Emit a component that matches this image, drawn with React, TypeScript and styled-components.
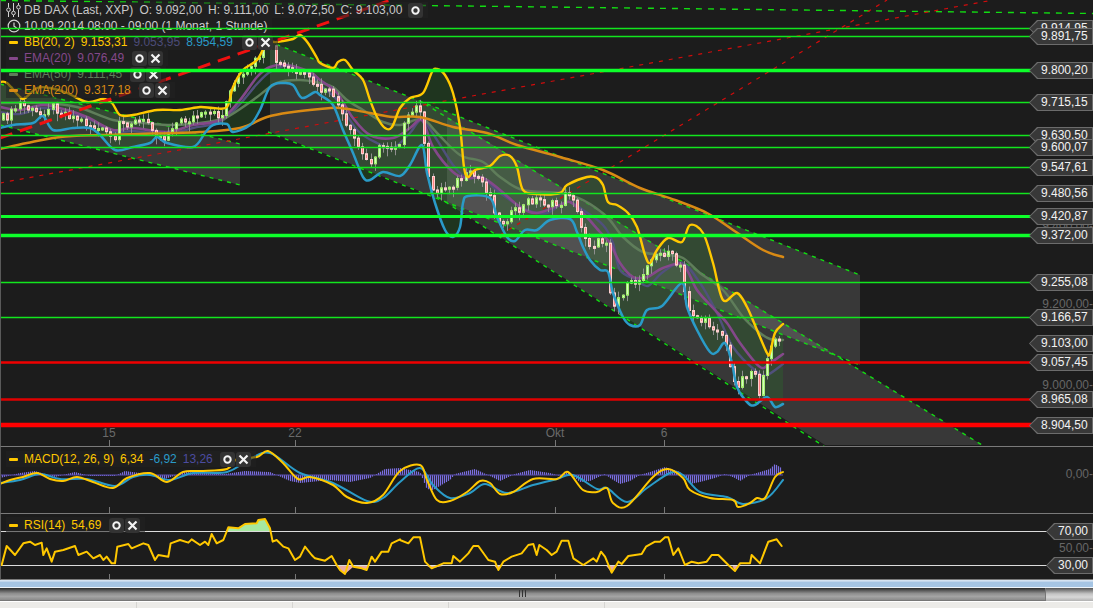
import React from "react";
import styled, { createGlobalStyle } from "styled-components";

type P = [number, number];

const GlobalStyle = createGlobalStyle`
  html, body { margin: 0; padding: 0; background: #1c1c1c; overflow: hidden; }
  body { font-family: "Liberation Sans", Arial, sans-serif; }
`;

/* ---------- data, page coordinates ---------- */
const upper: P[] = [[0,82],[7,83],[20,97],[25,98],[37,88],[50,88],[67,93],[87,102],[103,99],[112,103],[120,115],[133,115],[157,110],[180,110],[200,107],[213,108],[227,107],[233,87],[243,70],[257,60],[267,43],[277,42],[293,39],[300,35],[308,43],[317,58],[320,63],[333,68],[338,62],[345,60],[353,70],[363,80],[370,100],[377,117],[385,128],[392,127],[400,108],[410,98],[423,93],[432,72],[437,69],[445,75],[453,93],[460,127],[464,167],[468,177],[475,170],[490,166],[500,156],[510,156],[517,167],[523,190],[537,194],[560,193],[567,185],[587,177],[597,178],[603,185],[608,202],[617,205],[628,213],[637,227],[645,255],[650,263],[657,250],[668,238],[682,242],[690,225],[703,233],[713,263],[723,300],[737,293],[747,307],[757,330],[767,353],[770,353],[775,333],[783,324]];
const lower: P[] = [[0,128],[13,125],[33,123],[43,116],[53,130],[73,128],[90,128],[100,135],[115,150],[133,147],[150,143],[157,137],[167,143],[193,147],[205,133],[213,125],[227,124],[233,132],[250,125],[260,110],[270,87],[283,83],[293,85],[302,98],[315,92],[320,95],[333,105],[343,130],[353,153],[363,177],[370,180],[383,172],[400,176],[410,165],[422,145],[427,173],[435,203],[445,230],[453,237],[460,227],[463,203],[468,196],[490,198],[497,217],[507,237],[515,241],[525,230],[537,230],[550,220],[570,219],[577,232],[583,247],[590,260],[600,270],[608,272],[613,293],[623,317],[630,325],[640,325],[647,310],[662,306],[682,283],[687,307],[697,330],[710,352],[717,352],[725,343],[732,363],[737,387],[748,403],[755,405],[767,397],[775,407],[783,404]];
const ema20: P[] = [[0,107],[20,110],[43,105],[67,110],[87,117],[113,130],[133,128],[167,132],[193,125],[220,120],[240,100],[257,77],[270,67],[287,65],[310,72],[320,80],[337,93],[353,118],[370,135],[393,138],[410,128],[422,120],[433,147],[453,172],[467,178],[483,178],[500,190],[520,207],[537,213],[560,205],[570,202],[583,213],[600,232],[610,243],[620,263],[633,277],[647,277],[663,268],[683,265],[697,290],[713,308],[727,323],[740,343],[760,367],[770,363],[783,354]];
const bbMid: P[] = [[0,112],[20,114],[43,108],[67,113],[87,118],[113,132],[133,131],[167,134],[193,128],[220,122],[240,104],[257,84],[270,72],[287,66],[310,74],[320,85],[337,100],[357,130],[377,143],[393,148],[410,133],[422,120],[437,140],[453,165],[467,178],[483,178],[500,193],[527,210],[547,213],[560,205],[570,202],[583,210],[603,225],[613,243],[620,270],[637,280],[648,286],[663,272],[682,263],[700,283],[717,313],[733,347],[757,372],[767,375],[783,364]];
const ema50: P[] = [[0,103],[43,103],[77,107],[113,120],[143,123],[173,125],[207,122],[227,117],[253,100],[277,83],[300,80],[320,83],[333,87],[347,100],[363,110],[383,122],[400,125],[422,119],[437,133],[460,155],[483,162],[500,177],[523,190],[560,193],[583,200],[607,217],[623,237],[643,252],[667,255],[683,258],[700,273],[723,290],[743,317],[760,333],[770,339],[783,340]];
const ema200: P[] = [[0,149],[27,143],[60,137],[100,135],[140,134],[200,132],[240,128],[267,117],[293,112],[320,109],[340,108],[370,113],[393,117],[420,117],[453,127],[487,133],[517,145],[560,157],[603,170],[640,188],[675,200],[707,213],[733,230],[763,250],[783,257]];
const closes: P[] = [[0,120],[10,115],[20,103],[30,110],[40,115],[50,105],[60,110],[70,115],[80,120],[90,125],[100,130],[110,135],[115,148],[118,125],[130,122],[150,122],[158,135],[165,138],[172,125],[180,122],[200,116],[213,115],[225,115],[228,90],[240,78],[250,72],[262,50],[270,45],[275,60],[280,65],[290,70],[300,75],[310,80],[320,90],[335,95],[345,125],[355,140],[365,160],[372,160],[378,150],[385,145],[398,145],[405,125],[415,108],[422,108],[425,155],[430,190],[440,190],[450,185],[460,180],[470,175],[480,178],[490,195],[500,225],[510,215],[520,210],[530,200],[540,200],[550,205],[560,205],[568,192],[573,195],[580,225],[590,245],[607,240],[612,310],[620,295],[630,285],[640,280],[647,262],[660,255],[670,250],[675,265],[680,265],[685,295],[690,310],[700,320],[710,325],[720,330],[727,345],[732,380],[737,385],[745,375],[755,370],[760,395],[767,365],[772,340],[778,335],[781,345]];

const macdY: P[] = [[0,484],[10,480],[23,477],[37,473],[50,479],[63,481],[77,477],[93,482],[113,488],[127,478],[150,473],[167,482],[183,472],[200,471],[227,469],[237,459],[257,457],[268,451],[283,463],[298,479],[310,477],[333,485],[347,497],[367,503],[383,495],[400,471],[420,465],[427,480],[437,500],[450,501],[467,492],[480,481],[490,483],[500,494],[513,492],[533,479],[557,479],[568,472],[583,490],[597,492],[607,488],[613,503],[627,506],[653,477],[668,469],[683,478],[690,490],[710,498],[733,500],[738,507],[750,503],[757,498],[765,498],[775,477],[783,472]];
const macdB: P[] = [[0,483],[20,480],[40,474],[60,479],[87,479],[115,486],[133,477],[150,475],[170,480],[193,473],[227,472],[250,459],[270,453],[300,473],[333,483],[367,501],[383,498],[400,482],[420,468],[433,485],[450,498],[470,493],[485,484],[507,493],[533,485],[557,479],[573,475],[597,489],[607,488],[627,502],[647,488],[670,473],[683,475],[700,492],[727,497],[743,504],[767,498],[783,480]];
const macdH: P[] = [[0,-3],[20,2],[35,4],[55,-2],[75,3],[90,-1],[115,-1],[125,4],[140,2],[165,-4],[185,3],[225,1],[245,4],[270,3],[290,-6],[300,-8],[330,-5],[350,-7],[370,-3],[385,6],[400,7],[420,3],[427,-14],[433,-15],[450,-5],[455,1],[475,6],[490,-1],[500,-6],[515,1],[530,5],[550,2],[560,-1],[568,3],[580,-7],[590,-6],[605,1],[610,-3],[620,-9],[630,-6],[640,0],[650,3],[665,8],[680,3],[690,-9],[700,-7],[715,-3],[725,1],[735,-3],[740,-6],[750,0],[760,3],[770,6],[775,11],[783,6]];

const rsiA: P[] = [[0,430],[5,435],[20,378],[45,405],[70,370],[90,365],[105,375],[125,368],[130,405],[140,385],[155,425],[165,395],[190,390],[225,378],[235,405],[260,395],[280,415],[300,405],[310,420],[320,410],[335,430],[345,430],[352,380],[385,372],[395,385],[430,370],[445,375],[465,420],[475,405],[505,410],[512,370],[540,360],[565,368],[575,358],[600,375],[615,365],[625,375],[635,342],[650,370],[670,360],[685,322],[715,325],[735,312],[770,310],[775,300],[795,297],[810,325],[818,365],[830,360],[850,380],[865,385],[885,420],[900,410],[915,380],[935,405],[945,415],[975,422],[995,408],[1010,435],[1020,450],[1035,462],[1048,420],[1060,440],[1085,445],[1100,450],[1115,410],[1125,425],[1145,395],[1165,395],[1175,370],[1200,358]];
const rsiB: P[] = [[0,360],[25,370],[40,352],[60,352],[75,425],[95,445],[130,430],[155,430],[160,408],[180,425],[205,400],[220,378],[235,378],[265,420],[285,425],[295,450],[310,425],[335,410],[365,400],[385,375],[400,372],[410,405],[418,375],[440,390],[455,405],[470,395],[485,362],[505,362],[520,415],[550,435],[580,415],[590,425],[603,395],[615,410],[635,458],[655,425],[665,432],[685,408],[725,402],[738,380],[765,365],[780,365],[795,352],[805,352],[820,405],[835,385],[855,435],[875,425],[895,430],[920,425],[935,405],[955,405],[985,435],[1005,453],[1020,430],[1050,430],[1055,405],[1080,430],[1105,365],[1130,358],[1145,378]];
const rsi: P[] = [
  ...rsiA.map(([x, y]): P => [x / 3, 420 + y / 3]),
  ...rsiB.map(([x, y]): P => [400 + x / 3, 420 + y / 3]),
];

const pts = (a: P[]) => a.map(([x, y]) => `${x},${y}`).join(" ");
const curve = (a: P[]) => {
  let d = `M${a[0][0]} ${a[0][1]}`;
  for (let i = 0; i < a.length - 1; i++) {
    const p0 = a[Math.max(0, i - 1)];
    const p1 = a[i];
    const p2 = a[i + 1];
    const p3 = a[Math.min(a.length - 1, i + 2)];
    d += `C${p1[0] + (p2[0] - p0[0]) / 6} ${p1[1] + (p2[1] - p0[1]) / 6} ${p2[0] - (p3[0] - p1[0]) / 6} ${p2[1] - (p3[1] - p1[1]) / 6} ${p2[0]} ${p2[1]}`;
  }
  return d;
};
const interp = (a: P[], x: number) => {
  for (let i = 1; i < a.length; i++) {
    if (x <= a[i][0]) {
      const [x0, y0] = a[i - 1];
      const [x1, y1] = a[i];
      return y0 + ((y1 - y0) * (x - x0)) / (x1 - x0 || 1);
    }
  }
  return a[a.length - 1][1];
};

type Candle = { x: number; top: number; h: number; wickT: number; wickB: number; up: boolean };
const candles: Candle[] = (() => {
  const out: Candle[] = [];
  let prev = interp(closes, 0);
  for (let i = 0; 3 + i * 4.13 < 783; i++) {
    const x = Math.round(3 + i * 4.13) + 0.5;
    const n = Math.sin(i * 12.9898) * 43758.5453;
    const f = n - Math.floor(n);
    const close = interp(closes, x) + (f - 0.5) * 9;
    const top = Math.min(prev, close);
    const h = Math.max(2, Math.abs(close - prev));
    out.push({
      x,
      top,
      h,
      wickT: top - 1 - ((i * 7) % 6),
      wickB: top + h + 1 + ((i * 11) % 8),
      up: close < prev,
    });
    prev = close;
  }
  return out;
})();

const histogram = Array.from({ length: 391 }, (_, i) => {
  const x = i * 2 + 0.5;
  return { x, v: interp(macdH, x) };
});

const levels = [
  { y: 28.5, w: 1.4, c: "#12e61e" },
  { y: 36.5, w: 1.4, c: "#12e61e" },
  { y: 70.5, w: 3.4, c: "#0dff2a" },
  { y: 102.5, w: 1.4, c: "#12e61e" },
  { y: 135.5, w: 1.4, c: "#12e61e" },
  { y: 147.5, w: 1.4, c: "#12e61e" },
  { y: 167.5, w: 1.4, c: "#12e61e" },
  { y: 193.5, w: 1.4, c: "#12e61e" },
  { y: 216.5, w: 3, c: "#0dff2a" },
  { y: 235.5, w: 3.6, c: "#0dff2a" },
  { y: 282.5, w: 1.4, c: "#12e61e" },
  { y: 317.5, w: 1.4, c: "#12e61e" },
  { y: 362.5, w: 2.6, c: "#f00000" },
  { y: 399.5, w: 2.6, c: "#e00000" },
  { y: 425, w: 4.4, c: "#ff0000" },
];

const tags: [string, number][] = [
  ["9.914,95", 28.5], ["9.891,75", 36.5], ["9.800,20", 70.5], ["9.715,15", 102.5],
  ["9.630,50", 135.5], ["9.600,07", 147.5], ["9.547,61", 167.5], ["9.480,56", 193.5],
  ["9.420,87", 216.5], ["9.372,00", 235.5], ["9.255,08", 282.5], ["9.166,57", 317.5],
  ["9.103,00", 343.5], ["9.057,45", 362.5], ["8.965,08", 399.5], ["8.904,50", 425.5],
];

const dates: [string, number][] = [["15", 109], ["22", 295], ["Okt", 555], ["6", 664]];

/* ---------- styled parts ---------- */
const Page = styled.div`
  width: 1093px;
  height: 608px;
  display: flex;
  flex-direction: column;
  background: #1c1c1c;
  overflow: hidden;
`;
const Pane = styled.section<{ $h: number }>`
  position: relative;
  flex: none;
  height: ${(p) => p.$h}px;
  border-left: 1px solid #5a5a5a;
  box-sizing: border-box;
  border-bottom: 1px solid #7a7a7a;
  overflow: hidden;
`;
const Drawing = styled.svg<{ $z: number }>`
  position: absolute;
  left: -1px;
  top: 0;
  z-index: ${(p) => p.$z};
`;
const Legend = styled.div<{ $top: number }>`
  position: absolute;
  left: 5px;
  top: ${(p) => p.$top}px;
  z-index: 1;
  display: flex;
  flex-direction: column;
  align-items: flex-start;
`;
const LegendRow = styled.div<{ $h: number }>`
  display: flex;
  align-items: center;
  height: ${(p) => p.$h}px;
  padding-right: 4px;
  background: rgba(34, 34, 34, 0.55);
  font-size: 12px;
  white-space: pre;
  color: #c8c8c8;
`;
const Swatch = styled.i<{ $c: string }>`
  width: 9px;
  height: 3px;
  margin: 0 6px 0 3px;
  border-radius: 1px;
  background: ${(p) => p.$c};
`;
const Ink = styled.span<{ $c: string; $gap?: number }>`
  color: ${(p) => p.$c};
  margin-right: ${(p) => p.$gap ?? 6}px;
`;
const IconSlot = styled.span`
  display: inline-flex;
  width: 15px;
  margin: 0 3px 0 0;
  justify-content: center;
`;
const CtlButton = styled.button`
  width: 15px;
  height: 15px;
  padding: 0;
  margin-right: 1px;
  border: 0;
  border-radius: 3px;
  background: #333;
  display: inline-flex;
  align-items: center;
  justify-content: center;
`;
const Tag = styled.div<{ $y: number; $small?: boolean }>`
  position: absolute;
  z-index: 3;
  right: 0;
  top: ${(p) => p.$y - 8.5}px;
  width: ${(p) => (p.$small ? 47 : 64)}px;
  height: 17px;
  padding-left: 12px;
  box-sizing: border-box;
  background: #6c6c6c;
  clip-path: polygon(0 50%, 8px 0, 100% 0, 100% 100%, 8px 100%);
  color: #f2f2f2;
  font-size: 12px;
  line-height: 17px;
  isolation: isolate;
  &::before {
    content: "";
    position: absolute;
    inset: 1px;
    background: #383838;
    clip-path: polygon(0 50%, 8px 0, 100% 0, 100% 100%, 8px 100%);
    z-index: -1;
  }
`;
const AxisLabel = styled.div<{ $y: number }>`
  position: absolute;
  z-index: 2;
  right: 0;
  top: ${(p) => p.$y - 7}px;
  height: 14px;
  line-height: 14px;
  font-size: 12px;
  color: #666;
`;
const DateLabel = styled.div<{ $x: number }>`
  position: absolute;
  z-index: 2;
  left: ${(p) => p.$x - 21}px;
  top: 426px;
  width: 40px;
  text-align: center;
  font-size: 12px;
  line-height: 14px;
  color: #6a6a6a;
`;
const BlueBar = styled.div`
  flex: none;
  height: 8px;
  box-sizing: border-box;
  background: #a6c5e4;
  border-top: 1px solid #d5e3f2;
  border-bottom: 1px solid #eef4fa;
  box-shadow: inset 0 1px 0 #c2d6ec;
`;
const ScrollTrack = styled.div`
  flex: none;
  display: flex;
  height: 13px;
  background: linear-gradient(#555, #c4c4c4 45%, #d8d8d8 70%, #b0b0b0);
`;
const ScrollThumb = styled.div`
  width: 1046px;
  box-sizing: border-box;
  display: flex;
  align-items: flex-start;
  justify-content: center;
  padding-top: 2px;
  border-right: 1px solid #777;
  border-bottom: 1px solid #777;
  background: linear-gradient(#2c2c2c, #8d8d8d 45%, #a4a4a4 70%, #8a8a8a);
`;
const Grip = styled.div`
  width: 7px;
  height: 7px;
  background: repeating-linear-gradient(90deg, #333 0 1px, transparent 1px 3px);
`;
const Footer = styled.div`
  flex: 1;
  display: flex;
  border-top: 1px solid #fff;
  background: #ecebe8;
`;
const FooterCell = styled.div<{ $w: number }>`
  width: ${(p) => p.$w}px;
  box-sizing: border-box;
  border-right: 1px solid #d6d5d2;
`;

/* ---------- small drawings ---------- */
const Ring = () => (
  <svg width="11" height="11" viewBox="0 0 11 11">
    <circle cx="5.5" cy="5.5" r="3.2" fill="none" stroke="#f4f4f4" strokeWidth="2" />
  </svg>
);
const Cross = () => (
  <svg width="11" height="11" viewBox="0 0 11 11">
    <path d="M1.5 1.5 9.5 9.5M9.5 1.5 1.5 9.5" stroke="#f4f4f4" strokeWidth="2.2" />
  </svg>
);
const Controls = () => (
  <>
    <CtlButton aria-label="Anzeigen"><Ring /></CtlButton>
    <CtlButton aria-label="Entfernen"><Cross /></CtlButton>
  </>
);
const Sliders = () => (
  <svg width="15" height="14" viewBox="0 0 15 14" fill="none" stroke="#d4d4d4">
    <path d="M2.5 0v4.5M2.5 9v5M7.5 0v8M7.5 12v2M12.5 0v2M12.5 6.5v7.5" />
    <circle cx="2.5" cy="6.8" r="1.8" />
    <circle cx="7.5" cy="10" r="1.8" />
    <circle cx="12.5" cy="4.2" r="1.8" />
  </svg>
);
const Clock = () => (
  <svg width="14" height="14" viewBox="0 0 14 14" fill="none" stroke="#d4d4d4" strokeWidth="1.2">
    <circle cx="7" cy="7" r="5.8" />
    <path d="M7 3.5V7.3L9.6 9" />
  </svg>
);

const Smooth = ({ d, c, w = 2.2 }: { d: P[]; c: string; w?: number }) => (
  <path d={curve(d)} fill="none" stroke={c} strokeWidth={w} strokeLinejoin="round" strokeLinecap="round" />
);
const Line = ({ d, c, w = 2.2 }: { d: P[]; c: string; w?: number }) => (
  <polyline points={pts(d)} fill="none" stroke={c} strokeWidth={w} strokeLinejoin="round" strokeLinecap="round" />
);
const Dashed = ({ a, b, c = "#12dc12", w = 1.4, dash = "4 5" }: { a: P; b: P; c?: string; w?: number; dash?: string }) => (
  <line x1={a[0]} y1={a[1]} x2={b[0]} y2={b[1]} stroke={c} strokeWidth={w} strokeDasharray={dash} />
);
const Ticks = ({ y }: { y: number }) => (
  <>
    {dates.map(([, x]) => (
      <line key={x} x1={x + 0.5} x2={x + 0.5} y1={y} y2={y + 6} stroke="#777" />
    ))}
  </>
);

const channelFill = "rgba(255,255,255,0.125)";

const MainChart = () => (
  <Drawing $z={0} width="1093" height="446" viewBox="0 0 1093 446">
    <polygon points="0,84 240,144 240,185 0,125" fill={channelFill} />
    <polygon points="270,42 860,275 860,365 270,132" fill={channelFill} />
    <polygon points="447,117 982,445 825,445 447,203" fill={channelFill} />
    <path
      d={`${curve(upper)}L${curve([...lower].reverse()).slice(1)}Z`}
      fill="rgba(38,120,38,0.28)"
    />

    <Dashed a={[0, 84]} b={[240, 144]} />
    <Dashed a={[0, 125]} b={[240, 185]} />
    <Dashed a={[268, 41]} b={[860, 275]} />
    <Dashed a={[268, 132]} b={[860, 365]} />
    <Dashed a={[425, 104]} b={[982, 445]} />
    <Dashed a={[430, 192]} b={[825, 447]} />
    <Dashed a={[0, 0.5]} b={[1093, 13.5]} dash="6 6" />

    <Dashed a={[0, 183]} b={[993, 0]} c="#d00c0c" w={1.2} dash="4 6" />
    <Dashed a={[500, 235]} b={[887, 0]} c="#d00c0c" w={1.2} dash="4 6" />

    <Smooth d={bbMid} c="#50507c" w={2.4} />
    <Smooth d={ema50} c="#5f7d5a" w={2.5} />
    <Smooth d={ema20} c="#84488a" w={2.6} />
    {candles.map((k) => (
      <g key={k.x}>
        <line x1={k.x} x2={k.x} y1={k.wickT} y2={k.wickB} stroke="#8f8f8f" />
        <rect
          x={k.x - 1}
          y={k.top}
          width={2}
          height={k.h}
          fill={k.up ? "#d4fcc0" : "#ff8484"}
          stroke={k.up ? "#a4f070" : "#ffd0d0"}
          strokeWidth={1}
        />
      </g>
    ))}
    <Smooth d={ema200} c="#d98a14" w={2.5} />
    <Smooth d={lower} c="#2a9bc8" w={2.5} />
    <Smooth d={upper} c="#ffc800" w={2.4} />
    <Dashed a={[0, 138]} b={[391, 0]} c="#f01010" w={3} dash="13 8" />
    <Ticks y={440} />
  </Drawing>
);

const LevelLines = () => (
  <Drawing $z={2} width="1093" height="446" viewBox="0 0 1093 446">
    {levels.map((l) => (
      <line key={l.y} x1="0" x2="1093" y1={l.y} y2={l.y} stroke={l.c} strokeWidth={l.w} />
    ))}
  </Drawing>
);

const MacdChart = () => (
  <Drawing $z={0} width="1093" height="66" viewBox="0 447 1093 66">
    {histogram.map((b) => (
      <line key={b.x} x1={b.x} x2={b.x} y1={475} y2={475 - b.v} stroke="#7b6ee0" strokeWidth={1.2} />
    ))}
    <line x1="0" x2="783" y1="475" y2="475" stroke="#5c50b0" />
    <Smooth d={macdB} c="#2a9bc8" w={2} />
    <Smooth d={macdY} c="#ffc800" w={2} />
    <Ticks y={507} />
  </Drawing>
);

const overFill: P[] = [[227, 531.5], ...rsi.filter(([x, y]) => x > 227 && x < 272 && y < 531.5), [271, 531.5]];
const underRanges: [number, number][] = [[336, 368], [426, 445], [494, 501], [606, 617], [732, 740]];

const RsiChart = () => (
  <Drawing $z={0} width="1093" height="65" viewBox="0 514 1093 65">
    <polygon points={pts(overFill)} fill="#a6e8a0" />
    {underRanges.map(([a, b]) => (
      <polygon
        key={a}
        points={pts([[a, 565.5], ...rsi.filter(([x, y]) => x >= a && x <= b && y > 565.5), [b, 565.5]])}
        fill="#eaa9a4"
      />
    ))}
    <line x1="0" x2="1093" y1="531.5" y2="531.5" stroke="#dcdcdc" strokeWidth="1.2" />
    <line x1="0" x2="1093" y1="565.5" y2="565.5" stroke="#dcdcdc" strokeWidth="1.2" />
    <Line d={rsi} c="#ffc800" w={2} />
    <Ticks y={574} />
  </Drawing>
);

export default function App() {
  return (
    <Page>
      <GlobalStyle />
      <Pane $h={447}>
        <MainChart />
        <Legend $top={2}>
          <LegendRow $h={16}>
            <IconSlot><Sliders /></IconSlot>
            <Ink $c="#c8c8c8">DB DAX (Last, XXP)</Ink>
            <Ink $c="#c8c8c8">O: 9.092,00</Ink>
            <Ink $c="#c8c8c8">H: 9.111,00</Ink>
            <Ink $c="#c8c8c8">L: 9.072,50</Ink>
            <Ink $c="#c8c8c8">C: 9.103,00</Ink>
            <CtlButton aria-label="Anzeigen"><Ring /></CtlButton>
          </LegendRow>
          <LegendRow $h={16}>
            <IconSlot><Clock /></IconSlot>
            <Ink $c="#d0d0d0" $gap={0}>10.09.2014 08:00 - 09:00 (1 Monat, 1 Stunde)</Ink>
          </LegendRow>
          <LegendRow $h={16}>
            <Swatch $c="#ffc800" />
            <Ink $c="#ffc800">BB(20, 2)</Ink>
            <Ink $c="#ffc800">9.153,31</Ink>
            <Ink $c="#4c4c78">9.053,95</Ink>
            <Ink $c="#2a9bc8" $gap={9}>8.954,59</Ink>
            <Controls />
          </LegendRow>
          <LegendRow $h={16}>
            <Swatch $c="#84488a" />
            <Ink $c="#84488a">EMA(20)</Ink>
            <Ink $c="#84488a" $gap={8}>9.076,49</Ink>
            <Controls />
          </LegendRow>
          <LegendRow $h={16}>
            <Swatch $c="#5f7d5a" />
            <Ink $c="#5f7d5a">EMA(50)</Ink>
            <Ink $c="#5f7d5a" $gap={8}>9.111,45</Ink>
            <Controls />
          </LegendRow>
          <LegendRow $h={16}>
            <Swatch $c="#d98a14" />
            <Ink $c="#d98a14">EMA(200)</Ink>
            <Ink $c="#d98a14" $gap={8}>9.317,18</Ink>
            <Controls />
          </LegendRow>
        </Legend>
        <LevelLines />
        {dates.map(([t, x]) => (
          <DateLabel key={t} $x={x}>{t}</DateLabel>
        ))}
        <AxisLabel $y={225.5}>9.400,00-</AxisLabel>
        <AxisLabel $y={304}>9.200,00-</AxisLabel>
        <AxisLabel $y={384.5}>9.000,00-</AxisLabel>
        {tags.map(([t, y]) => (
          <Tag key={t} $y={y}>{t}</Tag>
        ))}
      </Pane>
      <Pane $h={67}>
        <MacdChart />
        <Legend $top={4}>
          <LegendRow $h={16}>
            <Swatch $c="#ffc800" />
            <Ink $c="#ffc800">MACD(12, 26, 9)</Ink>
            <Ink $c="#ffc800">6,34</Ink>
            <Ink $c="#2a9bc8">-6,92</Ink>
            <Ink $c="#4c4ca0" $gap={7}>13,26</Ink>
            <Controls />
          </LegendRow>
        </Legend>
        <AxisLabel $y={27}>0,00-</AxisLabel>
      </Pane>
      <Pane $h={66}>
        <RsiChart />
        <Legend $top={3}>
          <LegendRow $h={16}>
            <Swatch $c="#ffc800" />
            <Ink $c="#ffc800">RSI(14)</Ink>
            <Ink $c="#ffc800" $gap={8}>54,69</Ink>
            <Controls />
          </LegendRow>
        </Legend>
        <AxisLabel $y={34}>50,00-</AxisLabel>
        <Tag $small $y={17.5}>70,00</Tag>
        <Tag $small $y={51.5}>30,00</Tag>
      </Pane>
      <BlueBar />
      <ScrollTrack>
        <ScrollThumb><Grip /></ScrollThumb>
      </ScrollTrack>
      <Footer>
        <FooterCell $w={137} />
        <FooterCell $w={156} />
        <FooterCell $w={156} />
        <FooterCell $w={156} />
      </Footer>
    </Page>
  );
}
